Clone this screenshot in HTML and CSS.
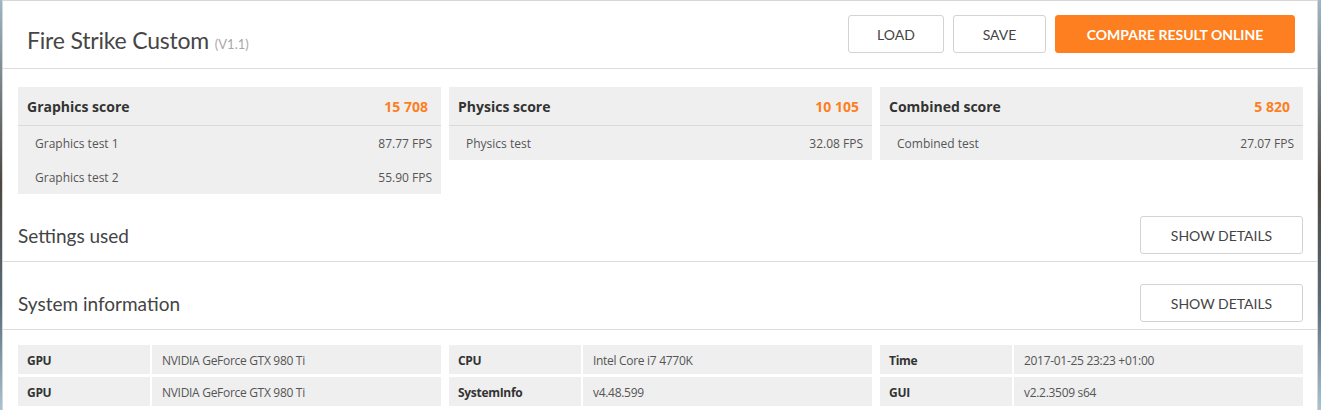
FILE: index.html
```html
<!DOCTYPE html>
<html lang="en">
<head>
<meta charset="UTF-8">
<title>Fire Strike Custom</title>
<link rel="stylesheet" href="styles.css">
</head>
<body>
<div class="panel">
    <div class="header">
        <h1 class="title">Fire Strike Custom <span class="version">(V1.1)</span></h1>
        <div class="actions">
            <button class="btn btn-load">LOAD</button>
            <button class="btn btn-save">SAVE</button>
            <button class="btn btn-primary">COMPARE RESULT ONLINE</button>
        </div>
    </div>

    <div class="content">
        <div class="scores">
            <div class="card">
                <div class="card-head"><span>Graphics score</span><span class="score">15 708</span></div>
                <div class="card-row"><span>Graphics test 1</span><span>87.77 FPS</span></div>
                <div class="card-row"><span>Graphics test 2</span><span>55.90 FPS</span></div>
            </div>
            <div class="card">
                <div class="card-head"><span>Physics score</span><span class="score">10 105</span></div>
                <div class="card-row"><span>Physics test</span><span>32.08 FPS</span></div>
            </div>
            <div class="card">
                <div class="card-head"><span>Combined score</span><span class="score">5 820</span></div>
                <div class="card-row"><span>Combined test</span><span>27.07 FPS</span></div>
            </div>
        </div>
    </div>

    <div class="section">
        <h2>Settings used</h2>
        <button class="btn btn-details">SHOW DETAILS</button>
    </div>

    <div class="section">
        <h2>System information</h2>
        <button class="btn btn-details">SHOW DETAILS</button>
    </div>

    <div class="content">
        <div class="sysinfo">
            <div class="info-group">
                <div class="info-label">GPU</div><div class="info-value">NVIDIA GeForce GTX 980 Ti</div>
                <div class="info-label">GPU</div><div class="info-value">NVIDIA GeForce GTX 980 Ti</div>
            </div>
            <div class="info-group">
                <div class="info-label">CPU</div><div class="info-value">Intel Core i7 4770K</div>
                <div class="info-label">SystemInfo</div><div class="info-value">v4.48.599</div>
            </div>
            <div class="info-group">
                <div class="info-label">Time</div><div class="info-value">2017-01-25 23:23 +01:00</div>
                <div class="info-label">GUI</div><div class="info-value">v2.2.3509 s64</div>
            </div>
        </div>
    </div>
</div>
</body>
</html>
```

FILE: styles.css
```css
html, body {
    height: 100%;
}

body {
    margin: 0;
    padding: 0 3px 0 2px;
    background: linear-gradient(180deg, #9db7c6 0%, #4d4640 45%, #5a6e7c 75%, #a8c4d4 100%);
    font-family: "Open Sans", "Noto Sans", sans-serif;
    color: #444444;
    box-sizing: border-box;
    overflow: hidden;
}

.panel {
    background-color: #ffffff;
    border: 1px solid #d6d6d6;
    border-bottom: none;
    height: 100%;
    box-sizing: border-box;
}

/* header */
.header {
    display: flex;
    justify-content: space-between;
    align-items: flex-start;
    height: 67px;
    padding: 0 22px 0 24px;
    border-bottom: 1px solid #dcdcdc;
}

.title {
    margin: 25px 0 0 0;
    font-family: Lato, sans-serif;
    font-weight: normal;
    font-size: 23px;
    letter-spacing: -0.2px;
    color: #464646;
}

.version {
    font-size: 13px;
    letter-spacing: 0;
    color: #a8a8a8;
}

.actions {
    display: flex;
    gap: 9px;
    margin-top: 14px;
}

.btn {
    height: 38px;
    background-color: #ffffff;
    border: 1px solid #d3d3d3;
    border-radius: 3px;
    font-family: Lato, sans-serif;
    font-size: 14px;
    color: #444444;
    cursor: pointer;
    padding: 0;
}

.btn-load {
    width: 96px;
}

.btn-save {
    width: 93px;
}

.btn-primary {
    width: 240px;
    background-color: #fd7f1f;
    border-color: #fd7f1f;
    color: #ffffff;
    font-weight: bold;
}

.btn-details {
    width: 163px;
}

/* scores */
.content {
    padding: 0 14px 0 15px;
}

.scores {
    display: grid;
    grid-template-columns: repeat(3, 1fr);
    gap: 8px;
    margin-top: 18px;
    align-items: start;
}

.card {
    background-color: #efefef;
}

.card-head {
    display: flex;
    justify-content: space-between;
    align-items: center;
    height: 38px;
    padding: 0 13px 0 9px;
    border-bottom: 1px solid #dadada;
    font-weight: bold;
    font-size: 14px;
    color: #333333;
}

.score {
    color: #fd7f1f;
}

.card-row {
    display: flex;
    justify-content: space-between;
    align-items: center;
    height: 34px;
    padding: 0 9px 0 17px;
    font-size: 12px;
    color: #555555;
}

/* sections */
.section {
    display: flex;
    justify-content: space-between;
    align-items: center;
    padding: 22px 14px 7px 15px;
    border-bottom: 1px solid #dcdcdc;
}

.section h2 {
    margin: 0;
    font-family: Lato, sans-serif;
    font-weight: normal;
    font-size: 19px;
    color: #444444;
}

/* system information */
.sysinfo {
    display: grid;
    grid-template-columns: repeat(3, 1fr);
    gap: 8px;
    margin-top: 15px;
}

.info-group {
    display: grid;
    grid-template-columns: 132px 1fr;
    gap: 3px 2px;
}

.info-label, .info-value {
    display: flex;
    align-items: center;
    height: 29px;
    padding-top: 1px;
    box-sizing: border-box;
    background-color: #efefef;
    font-size: 12px;
    letter-spacing: -0.3px;
    color: #555555;
}

.info-label {
    padding-left: 9px;
    font-weight: bold;
    color: #333333;
}

.info-value {
    padding-left: 10px;
}
```
